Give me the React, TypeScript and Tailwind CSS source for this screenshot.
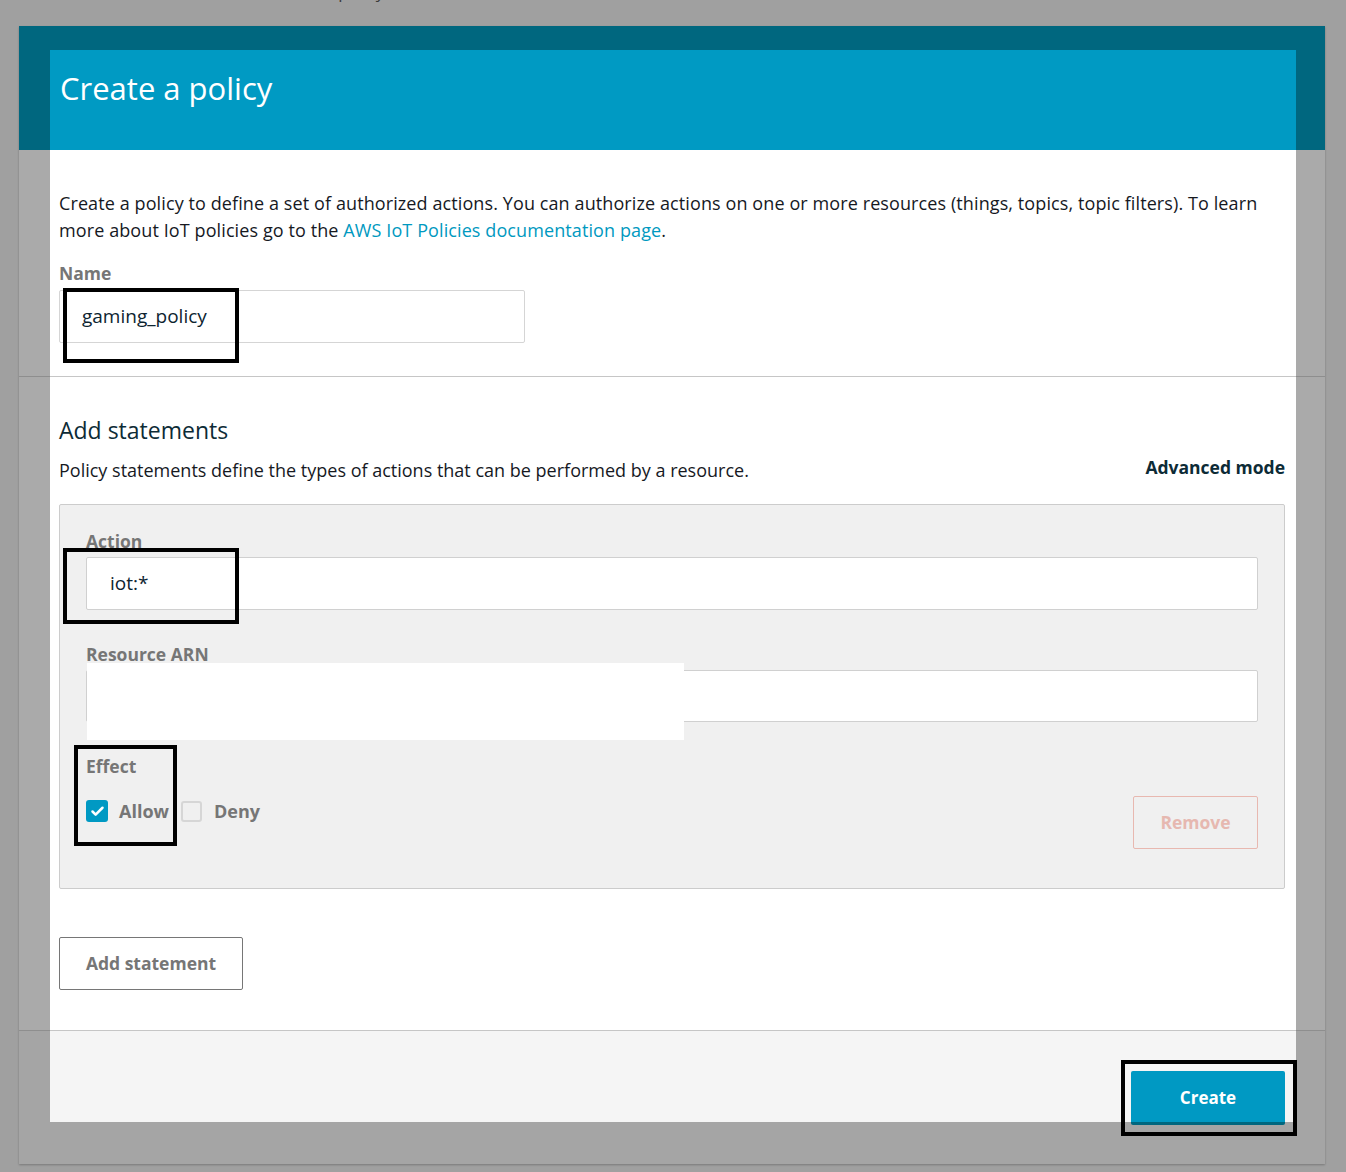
import { Check } from "lucide-react";

const font = { fontFamily: '"Open Sans", "Noto Sans", Arial, sans-serif' };

const Label = ({ children }: { children: React.ReactNode }) => (
  <div className="text-[17.5px] leading-[20px] font-bold text-[#767676]">{children}</div>
);

const Annotation = ({ className }: { className: string }) => (
  <div className={`absolute border-[4px] border-black pointer-events-none ${className}`} />
);

export default function App() {
  return (
    <div className="relative w-[1346px] h-[1172px] bg-[#a0a0a0] overflow-hidden" style={font}>
      {/* breadcrumb, mostly cut off by the top edge */}
      <div className="h-[26px] overflow-hidden">
        <div className="-mt-[18px] pl-[45px] text-[17px] leading-[20px] text-[#3a3a3a] whitespace-nowrap">
          <span className="text-[#2b6f88]">AWS IoT</span> / <span className="text-[#2b6f88]">Secure</span> /{" "}
          <span className="text-[#2b6f88]">Policies</span> / Create a policy
        </div>
      </div>

      {/* dimmed modal behind */}
      <div className="relative ml-[19px] w-[1306px] h-[1138px] flex flex-col shadow-[0_1px_2px_rgba(0,0,0,0.25)]">
        <div className="h-[124px] shrink-0 bg-[#00677f]" />
        <div className="h-[227px] shrink-0 bg-[#aaaaaa] border-b border-[#8e8e8e]" />
        <div className="h-[654px] shrink-0 bg-[#aaaaaa] border-b border-[#8e8e8e]" />
        <div className="flex-1 bg-[#a5a5a5]" />

        {/* front modal */}
        <div className="absolute left-[31px] top-[24px] w-[1246px] h-[1072px] flex flex-col bg-white">
          <div className="h-[100px] shrink-0 bg-[#009ac3] pl-[10px] pt-[17px]">
            <h1 className="text-[31px] leading-[42px] text-white">Create a policy</h1>
          </div>

          <div className="h-[227px] shrink-0 pt-[40px] pl-[9px] pr-[11px] border-b border-[#c6c6c6]">
            <p className="text-[18px] leading-[27px] tracking-[0.1px] text-[#16191f]">
              Create a policy to define a set of authorized actions. You can authorize actions on one or more
              resources (things, topics, topic filters). To learn more about IoT policies go to the{" "}
              <a className="text-[#0099c0]">AWS IoT Policies documentation page</a>.
            </p>
            <div className="mt-[19px]">
              <Label>Name</Label>
            </div>
            <div className="mt-[7px] w-[466px] h-[53px] border border-[#d5d5d5] rounded-[2px] flex items-center pl-[22px] text-[19px] text-[#0d2430]">
              gaming_policy
            </div>
          </div>

          <div className="h-[654px] shrink-0 pt-[38px] pl-[9px] pr-[11px] border-b border-[#c6c6c6]">
            <h2 className="text-[23px] leading-[30px] text-[#0d2b36]">Add statements</h2>
            <div className="mt-[13px] flex justify-between items-center">
              <p className="text-[18px] leading-[24px] text-[#16191f]">
                Policy statements define the types of actions that can be performed by a resource.
              </p>
              <span className="-mt-[6px] text-[17.5px] leading-[24px] font-bold text-[#0d2b36]">Advanced mode</span>
            </div>

            <div className="mt-[22px] h-[385px] bg-[#f0f0f0] border border-[#cccccc] rounded-[2px] px-[26px] pt-[26px]">
              <Label>Action</Label>
              <div className="mt-[6px] h-[53px] bg-white border border-[#d0d0d0] rounded-[2px] flex items-center pl-[23px] text-[19px] text-[#0d2430]">
                iot:*
              </div>

              <div className="mt-[34px]">
                <Label>Resource ARN</Label>
              </div>
              <div className="mt-[6px] h-[52px] bg-white border border-[#d0d0d0] rounded-[2px]" />

              <div className="mt-[34px]">
                <Label>Effect</Label>
              </div>
              <div className="mt-[20px] flex justify-between items-start">
                <div className="mt-[4px] flex items-center h-[22px]">
                  <span className="w-[22px] h-[22px] rounded-[3px] bg-[#0099c3] flex items-center justify-center">
                    <Check className="w-[15px] h-[15px] text-white" strokeWidth={4} />
                  </span>
                  <span className="ml-[11px] text-[18px] font-bold text-[#767676]">Allow</span>
                  <span className="ml-[12px] w-[21px] h-[21px] rounded-[3px] border-2 border-[#d6d6d6]" />
                  <span className="ml-[12px] text-[18px] font-bold text-[#767676]">Deny</span>
                </div>
                <button className="w-[125px] h-[53px] border border-[#e8b8b0] rounded-[2px] text-[17.5px] font-bold text-[#e6b8b0]">
                  Remove
                </button>
              </div>
            </div>

            <button className="mt-[48px] w-[184px] h-[53px] border border-[#767676] rounded-[2px] text-[17.5px] font-bold text-[#767676]">
              Add statement
            </button>
          </div>

          <div className="flex-1 min-h-0 bg-[#f5f5f5] flex justify-end items-start pt-[40px] pr-[11px]">
            <button className="shrink-0 w-[154px] h-[54px] pt-[3px] bg-[#0099c3] border-b-[3px] border-[#00677f] rounded-[2px] text-[17px] font-bold text-white">
              Create
            </button>
          </div>
        </div>
      </div>

      {/* redaction over the resource ARN */}
      <div className="absolute left-[87px] top-[663px] w-[597px] h-[77px] bg-white" />

      {/* annotation boxes */}
      <Annotation className="left-[63px] top-[288px] w-[176px] h-[75px]" />
      <Annotation className="left-[63px] top-[548px] w-[176px] h-[76px]" />
      <Annotation className="left-[74px] top-[745px] w-[103px] h-[101px]" />
      <Annotation className="left-[1121px] top-[1060px] w-[176px] h-[76px]" />
    </div>
  );
}
